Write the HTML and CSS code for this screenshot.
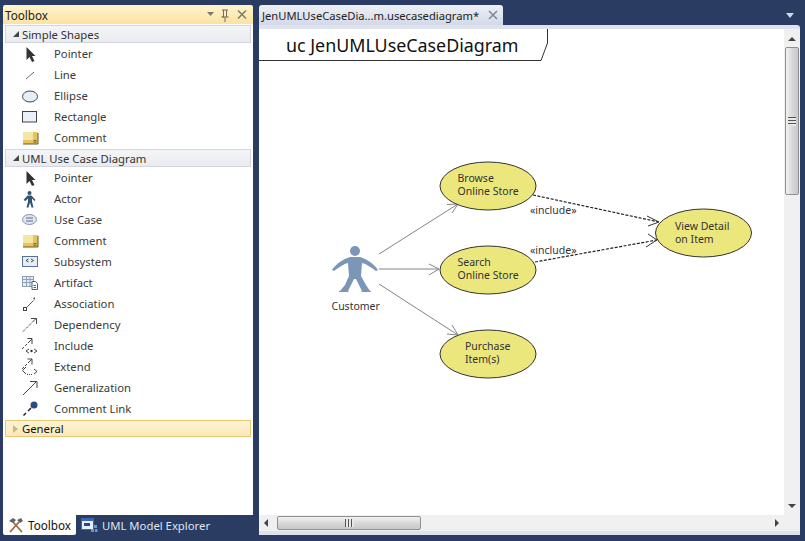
FILE: index.html
```html
<!DOCTYPE html>
<html lang="en">
<head>
<meta charset="utf-8">
<title>Toolbox</title>
<link rel="stylesheet" href="styles.css">
</head>
<body>
<div class="app">
  <aside class="toolpane">
    <div class="pane-title">
      <span class="pane-name">Toolbox</span>
      <svg class="pane-tools" width="44" height="19" viewBox="0 0 44 19">
        <path d="M1 7h7l-3.500 4z" fill="#7d7a6c"/>
        <path d="M17.500 5v7h-1.500M20.500 5v7M16 5h6M19 12v5M15.500 12h7" fill="none" stroke="#6f6c60"/>
        <path d="M32 5.500l8 8M40 5.500l-8 8" stroke="#7d7a6c" stroke-width="1.500"/>
      </svg>
    </div>
    <div class="pane-body">
      <div class="group-head"><i class="tri-open"></i>Simple Shapes</div>
      <ul class="items">
        <li><svg class="ico" viewBox="0 0 20 20"><path d="M6.500 3v13l3-3 2.500 5 2.500-1-2.500-5h3.500z" fill="#333"/></svg>Pointer</li>
        <li><svg class="ico" viewBox="0 0 20 20"><path d="M6 14l8-7" stroke="#666"/></svg>Line</li>
        <li><svg class="ico" viewBox="0 0 20 20"><ellipse cx="10" cy="10.500" rx="7.500" ry="5.500" fill="#e6eefa" stroke="#444"/></svg>Ellipse</li>
        <li><svg class="ico" viewBox="0 0 20 20"><rect x="2.500" y="4.500" width="14" height="10.500" fill="#eaf1fb" stroke="#444"/></svg>Rectangle</li>
        <li><svg class="ico" viewBox="0 0 20 20"><rect x="3" y="4" width="15" height="12" rx="1" fill="#e6c65c"/><rect x="3" y="4" width="10" height="8" fill="#f6e6a4"/><path d="M3 16h15V5" fill="none" stroke="#6b5a24"/><rect x="14" y="12.500" width="2" height="2" fill="none" stroke="#6b5a24" stroke-width=".7"/></svg>Comment</li>
      </ul>
      <div class="group-head"><i class="tri-open"></i>UML Use Case Diagram</div>
      <ul class="items">
        <li><svg class="ico" viewBox="0 0 20 20"><path d="M6.500 3v13l3-3 2.500 5 2.500-1-2.500-5h3.500z" fill="#333"/></svg>Pointer</li>
        <li><svg class="ico" viewBox="0 0 20 20"><circle cx="9.500" cy="4" r="2" fill="#33536e"/><path d="M3.500 11l4-4.500h4l4 4.500-1 1-2.500-2.500v3l1.500 6h-2l-1.500-5-1.500 5h-2l1.500-6v-3l-2.500 2.500z" fill="#33536e"/></svg>Actor</li>
        <li><svg class="ico" viewBox="0 0 20 20"><ellipse cx="9.500" cy="9.500" rx="7" ry="5" fill="#dfe4ee" stroke="#8793a8"/><path d="M6 8h7M6 11h7" stroke="#606c80"/></svg>Use Case</li>
        <li><svg class="ico" viewBox="0 0 20 20"><rect x="3" y="4" width="15" height="12" rx="1" fill="#e6c65c"/><rect x="3" y="4" width="10" height="8" fill="#f6e6a4"/><path d="M3 16h15V5" fill="none" stroke="#6b5a24"/><rect x="14" y="12.500" width="2" height="2" fill="none" stroke="#6b5a24" stroke-width=".7"/></svg>Comment</li>
        <li><svg class="ico" viewBox="0 0 20 20"><rect x="2.500" y="4.500" width="15" height="10" fill="#e4eefa" stroke="#57718f"/><path d="M8.500 7l-2.500 1.500 2.500 1.500M11 7l2.500 1.500-2.500 1.500" fill="none" stroke="#222" stroke-width=".8"/></svg>Subsystem</li>
        <li><svg class="ico" viewBox="0 0 20 20"><rect x="2.500" y="3.500" width="11" height="10" fill="#e8eef6" stroke="#8fa0b5"/><path d="M2.500 6.500h11M2.500 9.500h11M6.500 3.500v10M10 3.500v10" stroke="#8fa0b5"/><path d="M12 8.500h3.500l2 2v6H12z" fill="#fff" stroke="#44688c"/><path d="M13.500 12.500h2.500M13.500 14.500h2.500" stroke="#44688c"/></svg>Artifact</li>
        <li><svg class="ico" viewBox="0 0 20 20"><rect x="3.500" y="13.500" width="3" height="3" fill="#fff" stroke="#444"/><path d="M6.500 13.500l7-7" stroke="#555"/><rect x="13.500" y="3.500" width="1.500" height="2" fill="#555"/></svg>Association</li>
        <li><svg class="ico" viewBox="0 0 20 20"><path d="M3 16.500l2-2M6 13.500l2-2M9 10.500l2-2M12 7.500l4-4" stroke="#444"/><path d="M11 3.500h5.500V9" fill="none" stroke="#444"/></svg>Dependency</li>
        <li><svg class="ico" viewBox="0 0 20 20"><path d="M2 13l2-2M5 10l2-2M8 7l4-4" stroke="#444"/><path d="M7.500 2.500h4.500V8" fill="none" stroke="#444"/><path d="M9 13l-3 2 3 2M14 13l3 2-3 2" fill="none" stroke="#444"/><circle cx="11.500" cy="15" r="1.200" fill="#333"/></svg>Include</li>
        <li><svg class="ico" viewBox="0 0 20 20"><path d="M2 12l2-2M5 9l2-2M8 6l4-4" stroke="#444"/><path d="M7.500 2h4.500V7.500" fill="none" stroke="#444"/><path d="M6 10l-3.500 3.500L6 17M14 12l3 2.500-3 2.500" fill="none" stroke="#444"/><path d="M7 17.500h6" stroke="#444" stroke-dasharray="1 1"/></svg>Extend</li>
        <li><svg class="ico" viewBox="0 0 20 20"><path d="M3 17L16 4" stroke="#444"/><path d="M10 3.500h7V10" fill="none" stroke="#444"/></svg>Generalization</li>
        <li><svg class="ico" viewBox="0 0 20 20"><circle cx="14" cy="6" r="3.500" fill="#2c4a86"/><path d="M3.500 16.500l2.500-2.500M8 12l3-3" stroke="#223" stroke-width="1.500"/></svg>Comment Link</li>
      </ul>
      <div class="group-head general"><i class="tri-closed"></i>General</div>
    </div>
    <nav class="pane-tabs">
      <div class="pane-tab active">
        <svg width="16" height="16" viewBox="0 0 16 16"><path d="M2 15L11 5M14 15L5 5" stroke="#9a6a48" stroke-width="1.800"/><path d="M1 4l4-3 3 2-3 3zM9 3l4-2 2 3-3 2z" fill="#5f646e"/></svg>
        <span>Toolbox</span>
      </div>
      <div class="pane-tab">
        <svg width="17" height="16" viewBox="0 0 17 16"><rect x=".5" y="1.500" width="12" height="11" fill="#e7effa" stroke="#3c66b0"/><rect x=".5" y="1.500" width="12" height="2.500" fill="#3c66b0"/><path d="M3 6h6v3H3z" fill="#274a8c"/><path d="M13 8h3v3h-3zM10 12h3v3h-3zM14 12h2.500v3H14z" fill="#5aa0dc"/></svg>
        <span>UML Model Explorer</span>
      </div>
    </nav>
  </aside>
  <main class="docpane">
    <div class="doc-tabs">
      <div class="doc-tab">
        <span class="doc-name">JenUMLUseCaseDia...m.usecasediagram*</span>
        <svg width="10" height="10" viewBox="0 0 10 10"><path d="M1 1l8 8M9 1l-8 8" stroke="#7f8794" stroke-width="1.500"/></svg>
      </div>
      <svg class="doc-menu" width="8" height="5" viewBox="0 0 8 5"><path d="M0 0h8L4 5z" fill="#cfd8e8"/></svg>
    </div>
    <div class="doc-frame">
      <div class="doc-main">
        <svg class="canvas" viewBox="259 29 525 486" width="525" height="486">
          <path class="frame" d="M259 60.500H541L547.500 43V29"/>
          <text class="frame-title" x="286" y="51.500">uc JenUMLUseCaseDiagram</text>

          <circle cx="355" cy="251" r="5" fill="#7b96b6"/>
          <path fill="#7b96b6" d="M332 270C336 264 343 259 350 257H360C367 259 374 264 378 270L376 271C371 267 366 264 362 263L361 276L366 285L370 291H371V292H361L362 291L356 279H354L348 291L349 292H339V291H340L345 285L349 276L348 263C344 264 339 267 334 271Z"/>
          <text class="lbl" x="331.500" y="309.500">Customer</text>

          <g class="assoc">
            <path d="M379 254L458 204M447 204.500L458 204L452 213"/>
            <path d="M379 269H439M429 264L439 269L429 275"/>
            <path d="M379 284L458 335M452 325L458 335L447 334"/>
          </g>
          <g class="dep">
            <path d="M533 195L659 222"/>
            <path d="M535 262L657 240"/>
          </g>
          <g class="head">
            <path d="M647 216L659 222L648 226"/>
            <path d="M648 234L657 240L646 247"/>
          </g>

          <ellipse class="uc" cx="488" cy="186" rx="48" ry="24"/>
          <ellipse class="uc" cx="488" cy="270" rx="48" ry="24"/>
          <ellipse class="uc" cx="488" cy="354" rx="48" ry="24"/>
          <ellipse class="uc" cx="703.500" cy="233" rx="48" ry="24"/>

          <text class="lbl" x="457.500" y="182">Browse</text>
          <text class="lbl" x="457.500" y="195">Online Store</text>
          <text class="lbl" x="457.500" y="266">Search</text>
          <text class="lbl" x="457.500" y="279">Online Store</text>
          <text class="lbl" x="465" y="350">Purchase</text>
          <text class="lbl" x="465" y="363">Item(s)</text>
          <text class="lbl" x="675" y="230">View Detail</text>
          <text class="lbl" x="675" y="243">on Item</text>
          <text class="lbl" x="530" y="214">«include»</text>
          <text class="lbl" x="530" y="254">«include»</text>
        </svg>
        <div class="vscroll">
          <i class="arrow-up"></i>
          <div class="vthumb"><span class="grip"></span></div>
          <i class="arrow-down"></i>
        </div>
      </div>
      <div class="hscroll">
        <i class="arrow-left"></i>
        <div class="hthumb"><span class="grip-h"></span></div>
        <i class="arrow-right"></i>
      </div>
    </div>
  </main>
</div>
</body>
</html>
```

FILE: styles.css
```css
* { box-sizing: border-box; }
html, body { margin: 0; padding: 0; }
body {
  width: 805px;
  height: 541px;
  overflow: hidden;
  background: #2a3c62;
  font-family: "Noto Sans", "Open Sans", sans-serif;
  font-size: 11.300px;
  color: #3a3a3a;
}
.app {
  display: flex;
  gap: 6px;
  height: 541px;
  padding: 5px 5px 6px 3px;
}

/* Toolbox pane */
.toolpane { width: 250px; display: flex; flex-direction: column; }
.pane-title {
  height: 19px;
  flex: none;
  display: flex;
  align-items: center;
  justify-content: space-between;
  padding-left: 2px;
  border-radius: 2px 2px 0 0;
  background: linear-gradient(#fff4cf, #fce2a0);
  color: #222;
  font-size: 11.700px;
}
.pane-tools { margin-right: 3px; }
.pane-body {
  flex: 1;
  background: #fff;
  padding: 1px 2px 0;
}
.group-head {
  height: 18px;
  display: flex;
  align-items: center;
  padding-left: 7px;
  background: linear-gradient(#f4f5f7, #e9ebef);
  border: 1px solid #d3d6e0;
  color: #333;
}
.group-head.general {
  height: 17px;
  margin-top: 1px;
  background: linear-gradient(#fdf4d6, #fbe8b6);
  border-color: #e6c872;
  color: #111;
}
.tri-open {
  width: 0; height: 0;
  margin-right: 3px;
  border-left: 6px solid transparent;
  border-bottom: 6px solid #444;
}
.tri-closed {
  width: 0; height: 0;
  margin-right: 4px;
  border-top: 4px solid transparent;
  border-bottom: 4px solid transparent;
  border-left: 5px solid #c8b98a;
}
.items { list-style: none; margin: 0 0 1px; padding: 0; }
.items li {
  height: 21px;
  display: flex;
  align-items: center;
  gap: 14px;
  padding-left: 15px;
}
.ico { width: 20px; height: 20px; flex: none; }
.pane-tabs { height: 20px; flex: none; display: flex; font-size: 11.700px; }
.pane-tab {
  display: flex;
  align-items: center;
  gap: 4px;
  padding: 0 4px 0 5px;
  color: #dfe5f0;
}
.pane-tab.active {
  width: 73px;
  background: #fff;
  color: #111;
  border-radius: 0 0 2px 2px;
}
.pane-tab:not(.active) { font-size: 11.300px; padding-left: 5px; }

/* Document pane */
.docpane { width: 541px; display: flex; flex-direction: column; }
.doc-tabs { height: 20px; flex: none; display: flex; align-items: center; justify-content: space-between; }
.doc-tab {
  width: 244px;
  height: 20px;
  display: flex;
  align-items: center;
  justify-content: space-between;
  padding: 0 5px 0 3px;
  border-radius: 3px 3px 0 0;
  background: linear-gradient(#eef0f6, #d3d9e7);
  color: #222;
  font-size: 11.200px;
}
.doc-menu { margin-right: 6px; }
.doc-frame {
  flex: 1;
  min-height: 0;
  display: flex;
  flex-direction: column;
  background: #dde2ee;
  padding-top: 4px;
  border-radius: 0 3px 0 0;
}
.doc-main { height: 486px; display: flex; }
.canvas { display: block; background: #fff; flex: none; }
.frame { fill: none; stroke: #333; stroke-width: 1; }
.frame-title { font-size: 17.850px; fill: #111; }
.lbl { font-size: 10.500px; fill: #333; }
.uc { fill: #ebe77d; stroke: #333; stroke-width: 1; }
.assoc path { fill: none; stroke: #858585; stroke-width: 1; }
.dep path { fill: none; stroke: #222; stroke-width: 1.200; stroke-dasharray: 3 1.500; }
.head path { fill: none; stroke: #333; }

.vscroll {
  width: 16px;
  display: flex;
  flex-direction: column;
  align-items: center;
  background: #f0f0f0;
}
.arrow-up {
  width: 0; height: 0;
  margin: 8px 0 6px;
  border-left: 4px solid transparent;
  border-right: 4px solid transparent;
  border-bottom: 4px solid #444;
}
.vthumb {
  width: 14px;
  height: 148px;
  display: flex;
  align-items: center;
  justify-content: center;
  border: 1px solid #8f8f8f;
  border-radius: 2px;
  background: linear-gradient(90deg, #f2f2f2, #d4d4d6 60%, #c8c8cc);
}
.grip {
  width: 8px;
  height: 9px;
  background: repeating-linear-gradient(#555 0 1px, #e8e8e8 1px 3px);
}
.arrow-down {
  width: 0; height: 0;
  margin-top: auto;
  margin-bottom: 7px;
  border-left: 4px solid transparent;
  border-right: 4px solid transparent;
  border-top: 4px solid #444;
}
.hscroll {
  height: 16px;
  margin-bottom: 4px;
  display: flex;
  align-items: center;
  background: #f0f0f0;
  padding-left: 5px;
}
.arrow-left {
  width: 0; height: 0;
  margin-right: 9px;
  border-top: 4px solid transparent;
  border-bottom: 4px solid transparent;
  border-right: 4px solid #444;
}
.hthumb {
  width: 144px;
  height: 14px;
  display: flex;
  align-items: center;
  justify-content: center;
  border: 1px solid #8f8f8f;
  border-radius: 2px;
  background: linear-gradient(#f2f2f2, #d4d4d6 60%, #c8c8cc);
}
.grip-h {
  width: 9px;
  height: 8px;
  background: repeating-linear-gradient(90deg, #555 0 1px, #e8e8e8 1px 3px);
}
.arrow-right {
  width: 0; height: 0;
  margin-left: auto;
  margin-right: 21px;
  border-top: 4px solid transparent;
  border-bottom: 4px solid transparent;
  border-left: 4px solid #444;
}
```
